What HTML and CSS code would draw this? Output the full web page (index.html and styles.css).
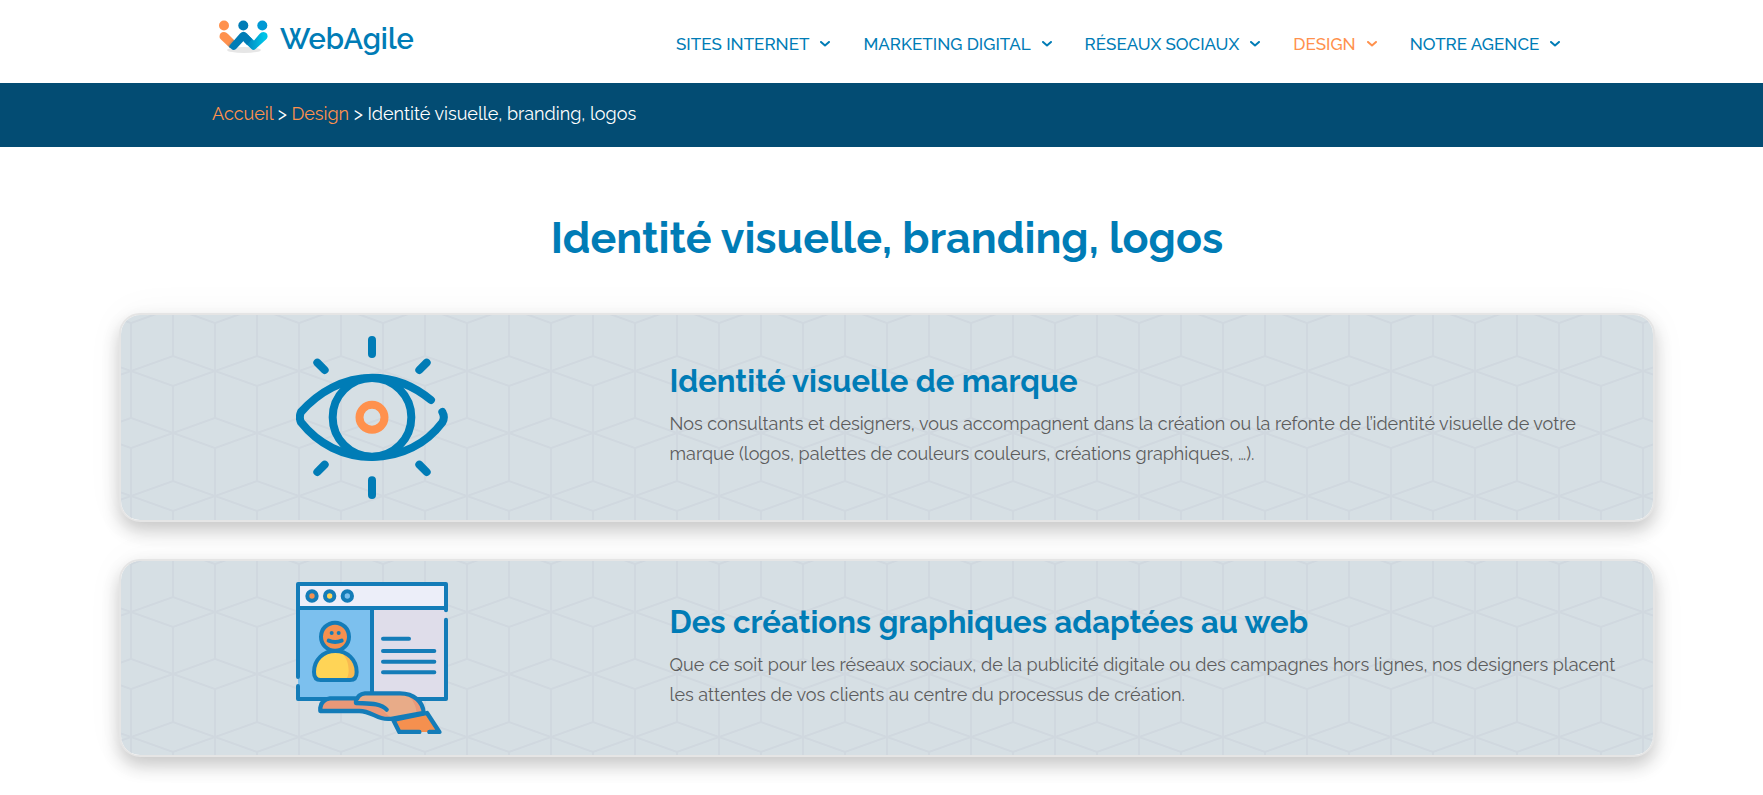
FILE: index.html
```html
<!DOCTYPE html>
<html lang="fr">
<head>
<meta charset="utf-8">
<meta name="viewport" content="width=device-width, initial-scale=1">
<title>Identité visuelle, branding, logos - WebAgile</title>
<link rel="stylesheet" href="styles.css">
</head>
<body>
<header class="site-header">
  <a class="logo" href="#">
    <svg class="logo-mark" viewBox="0 0 52 36" aria-hidden="true">
      <defs>
        <linearGradient id="lg-orange" gradientUnits="userSpaceOnUse" x1="6" y1="17" x2="18" y2="28"><stop offset=".45" stop-color="#ff914d"/><stop offset="1" stop-color="#0a6fa8"/></linearGradient>
        <linearGradient id="lg-cyan" gradientUnits="userSpaceOnUse" x1="26" y1="18" x2="46" y2="18"><stop offset="0" stop-color="#007cb6"/><stop offset="1" stop-color="#00c4e8"/></linearGradient>
      </defs>
      <ellipse cx="26" cy="30" rx="17" ry="3" fill="#e6e6e6"/>
      <path d="M1.500 17Q1.500 12 6 12Q8 12 10 14L18 22L12 28L3 19.500Q1.500 18 1.500 17Z" fill="url(#lg-orange)"/>
      <path d="M24 18L30 15L36 20.500L41.500 14Q43 12 45.500 12Q50 12.500 49.500 17Q49 18.500 48 19.500L37.500 29Q35.500 31 33.500 29L26 22Z" fill="url(#lg-cyan)"/>
      <path d="M12 25L22 13.500Q25.500 10 29 13.500L34 19L29 25L25.500 21L18 29Q15.500 31 13.500 29L11 27Z" fill="#007cb6"/>
      <circle cx="6" cy="5.500" r="5" fill="#ff914d"/>
      <circle cx="25.300" cy="5.500" r="5" fill="#007cb6"/>
      <circle cx="44.300" cy="5.500" r="5" fill="#0098d4"/>
    </svg>
    <span class="logo-name">WebAgile</span>
  </a>
  <nav class="main-nav" aria-label="Menu principal">
    <a class="nav-link" href="#">SITES INTERNET<svg class="caret" viewBox="0 0 10 6" aria-hidden="true"><path d="M1 1L5 4.500L9 1"/></svg></a>
    <a class="nav-link" href="#">MARKETING DIGITAL<svg class="caret" viewBox="0 0 10 6" aria-hidden="true"><path d="M1 1L5 4.500L9 1"/></svg></a>
    <a class="nav-link" href="#">RÉSEAUX SOCIAUX<svg class="caret" viewBox="0 0 10 6" aria-hidden="true"><path d="M1 1L5 4.500L9 1"/></svg></a>
    <a class="nav-link nav-link-current" href="#">DESIGN<svg class="caret" viewBox="0 0 10 6" aria-hidden="true"><path d="M1 1L5 4.500L9 1"/></svg></a>
    <a class="nav-link" href="#">NOTRE AGENCE<svg class="caret" viewBox="0 0 10 6" aria-hidden="true"><path d="M1 1L5 4.500L9 1"/></svg></a>
  </nav>
</header>

<nav class="breadcrumb" aria-label="Fil d’Ariane"><a href="#">Accueil</a> &gt; <a href="#">Design</a> &gt; Identité visuelle, branding, logos</nav>

<main class="page">
  <h1 class="page-title">Identité visuelle, branding, logos</h1>

  <article class="card">
    <div class="card-figure">
      <svg class="card-icon" viewBox="48 48 456 490" aria-hidden="true">
        <g fill="none" stroke="#007cb6" stroke-width="24" stroke-linecap="round" stroke-linejoin="round">
          <path d="M453 240C399 195 340 173 276 173C190 173 115 217 63 276Q56 292 63 307C115 373 190 411 276 411C365 411 440 370 487 307Q496 292 487 276"/>
          <circle cx="276" cy="292" r="118"/>
          <path d="M276 60V102M276 481V525M112 128L134 150M440 128L418 150M134 434L112 456M418 434L440 456"/>
        </g>
        <circle cx="276" cy="292" r="37.500" fill="none" stroke="#ff914d" stroke-width="24"/>
      </svg>
    </div>
    <div class="card-text">
      <h2 class="card-title">Identité visuelle de marque</h2>
      <p>Nos consultants et designers, vous accompagnent dans la création ou la refonte de l’identité visuelle de votre marque (logos, palettes de couleurs couleurs, créations graphiques, …).</p>
    </div>
  </article>

  <article class="card">
    <div class="card-figure">
      <svg class="card-icon" viewBox="48 39 456 456" aria-hidden="true">
        <path d="M54 45H498V117H54Z" fill="#eceef9"/>
        <path d="M54 117H276V390H54Z" fill="#7cc0ee"/>
        <path d="M276 117H498V390H276Z" fill="#dfddea"/>
        <g fill="none" stroke="#147cb8" stroke-width="12" stroke-linecap="round" stroke-linejoin="round">
          <path d="M54 324V45H498V124M54 351V390H498V152M54 117H498M276 117V384"/>
          <circle cx="96" cy="81" r="14" fill="#f5904f"/>
          <circle cx="149" cy="81" r="14" fill="#ffd456"/>
          <circle cx="202" cy="81" r="14" fill="#7cc0ee"/>
          <circle cx="165" cy="203" r="42" fill="#f5904f"/>
        </g>
        <path d="M102 309C102 272 130 246 166 246C202 246 230 272 230 309Q230 333 210 333H122Q102 333 102 309Z" fill="#ffd456"/>
        <path d="M180 247C212 252 230 276 230 309Q230 333 205 333H192Q206 328 206 305C206 279 196 260 180 247Z" fill="#f9ba50"/>
        <g fill="none" stroke="#147cb8" stroke-width="12" stroke-linecap="round" stroke-linejoin="round">
          <path d="M102 309C102 272 130 246 166 246C202 246 230 272 230 309Q230 333 210 333H122Q102 333 102 309Z"/>
          <path d="M146 215Q165 223 185 215"/>
          <path d="M309 209H387M309 246H463M309 278H463M309 310H463"/>
        </g>
        <circle cx="155" cy="192" r="6" fill="#147cb8"/>
        <circle cx="176" cy="192" r="6" fill="#147cb8"/>
        <path d="M121 426V416Q124 390 150 388H232L322 404L345 448C315 456 294 442 276 434C262 428 250 426 238 426Z" fill="#ea9878"/>
        <path d="M228 402V396Q234 374 255 373H360C402 373 430 400 431 432L342 449C326 446 308 424 300 408C278 403 250 402 228 402Z" fill="#e8ab88"/>
        <path d="M378 375C410 380 430 402 431 432L409 436C411 412 398 389 378 375Z" fill="#ea9878"/>
        <path d="M340 453L441 432L478 489H358Z" fill="#f5904f"/>
        <g fill="none" stroke="#147cb8" stroke-width="13" stroke-linecap="round" stroke-linejoin="round">
          <path d="M232 388H150Q124 392 121 416V426H238C266 426 284 442 304 447Q322 452 342 448L431 432C430 400 402 373 360 373H255Q234 375 228 396V402C262 404 300 400 320 422"/>
          <path d="M418 489H358L340 453L441 432L478 489H448"/>
        </g>
      </svg>
    </div>
    <div class="card-text">
      <h2 class="card-title">Des créations graphiques adaptées au web</h2>
      <p>Que ce soit pour les réseaux sociaux, de la publicité digitale ou des campagnes hors lignes, nos designers placent les attentes de vos clients au centre du processus de création.</p>
    </div>
  </article>
</main>
</body>
</html>
```
FILE: styles.css
```css
* {
  box-sizing: border-box;
}

body {
  margin: 0;
  background: #fff;
  color: #5c5c5c;
  font: 400 18px/30px Raleway, "Open Sans", sans-serif;
}

a {
  color: inherit;
  text-decoration: none;
}

h1,
h2,
p {
  margin: 0;
}

.site-header {
  display: flex;
  align-items: flex-start;
  justify-content: space-between;
  gap: 24px;
  min-height: 83px;
  padding: 20px 11.5% 0 218px;
}

.logo {
  display: flex;
  gap: 10px;
  color: #007cb6;
}

.logo-mark {
  flex: none;
  width: 52px;
  height: 36px;
}

.logo-name {
  font-size: 29px;
  font-weight: 600;
  line-height: 38px;
}

.main-nav {
  display: flex;
  gap: 33px;
  padding-top: 14px;
}

.nav-link {
  display: flex;
  align-items: center;
  gap: 11px;
  color: #007cb6;
  font-size: 17px;
  font-weight: 500;
  line-height: 20px;
  white-space: nowrap;
}

.nav-link-current {
  color: #ff914d;
}

.caret {
  width: 10px;
  height: 6px;
  fill: none;
  stroke: currentColor;
  stroke-width: 2;
  stroke-linecap: round;
  stroke-linejoin: round;
}

.breadcrumb {
  padding: 16px 212px 18px;
  background: #034c73;
  color: #fff;
}

.breadcrumb a {
  color: #ff914d;
}

.page {
  display: flex;
  flex-direction: column;
  gap: 37px;
  padding: 70px 108px 37px 119px;
}

.page-title {
  margin-bottom: 17px;
  color: #007cb6;
  font-size: 43px;
  font-weight: 700;
  line-height: 42px;
  text-align: center;
}

.card {
  display: flex;
  align-items: center;
  padding: 21px 0;
  border: 2px solid #e5e5e5;
  border-radius: 21px;
  background: #d6dfe4 url("data:image/svg+xml,%3Csvg xmlns='http://www.w3.org/2000/svg' width='84' height='125'%3E%3Cpath d='M0 31L42 16L84 31L42 46ZM0 78L42 93L0 108M84 78L42 93L84 108M42 46V125M42 0V16M0 0V78M0 108V125M84 0V78M84 108V125' fill='none' stroke='%23d0d8df' stroke-width='2'/%3E%3C/svg%3E") calc(50% + 42px) calc(50% - 15px);
  background-clip: padding-box;
  box-shadow: 0 9px 18px rgba(0, 0, 0, .2), 0 0 40px rgba(0, 0, 0, .04);
}

.card-figure {
  display: flex;
  flex: 0 0 33%;
  justify-content: center;
  padding-right: 4px;
}

.card-icon {
  display: block;
  width: 152px;
}

.card-text {
  flex: 1;
  padding: 0 28px 0 43px;
}

.card-title {
  margin-bottom: 12px;
  color: #007cb6;
  font-size: 31px;
  font-weight: 700;
  line-height: 31px;
}
```
